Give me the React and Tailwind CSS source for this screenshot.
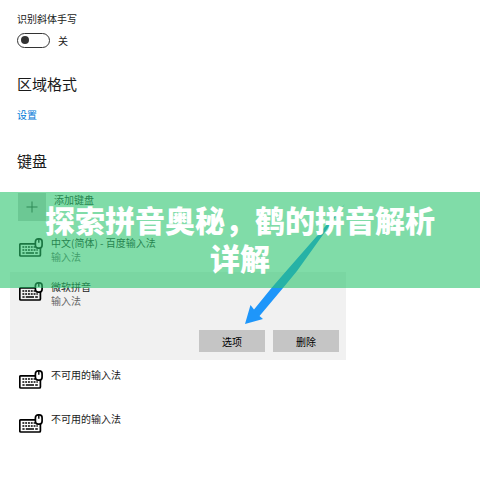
import React, { useState } from 'react';

const keyboards = [
  { id: 'baidu', name: '中文(简体) - 百度输入法', kind: '输入法' },
  { id: 'ms-pinyin', name: '微软拼音', kind: '输入法', selected: true },
  { id: 'unavailable-1', name: '不可用的输入法' },
  { id: 'unavailable-2', name: '不可用的输入法' },
];

function KeyboardIcon() {
  return (
    <svg viewBox="0 0 24 19" className="w-6 h-[19px] shrink-0" fill="none" stroke="#000" aria-hidden="true">
      <path d="M16.5 5.8H1.8a1 1 0 0 0-1 1v10.2a1 1 0 0 0 1 1h18.6a1 1 0 0 0 1-1V9.5" strokeWidth="1.7" />
      <path d="M3.4 9h13" strokeWidth="1.7" strokeDasharray="1.9 .9" />
      <path d="M3.4 12h15.4" strokeWidth="1.7" strokeDasharray="1.9 .9" />
      <path d="M3.4 15h2.2M6.8 15h8.2M16.2 15h2.6" strokeWidth="1.7" />
      <rect x="16.4" y="0.9" width="6.7" height="9.2" rx="2.8" fill="#fff" fillOpacity="0.9" strokeWidth="1.7" />
      <path d="M19.8 1v3.8" strokeWidth="1.4" />
    </svg>
  );
}

function KeyboardItem({ item }) {
  return (
    <li className={item.selected ? 'bg-[#f1f1f1] pb-2' : ''}>
      <div className="flex h-11 gap-2 pl-[9px] pt-2">
        <div className="pt-0.5">
          <KeyboardIcon />
        </div>
        <div className="leading-[14px]">
          <p>{item.name}</p>
          {item.kind && <p className="text-[#666]">{item.kind}</p>}
        </div>
      </div>
      {item.selected && (
        <div className="mt-3.5 flex justify-end gap-2 pr-[7px]">
          <button type="button" className="h-[22px] w-[66px] bg-[#c5c5c5] text-black">选项</button>
          <button type="button" className="h-[22px] w-[66px] bg-[#c5c5c5] text-black">删除</button>
        </div>
      )}
    </li>
  );
}

export default function App() {
  const [italic, setItalic] = useState(false);

  return (
    <div className="relative min-h-screen bg-white pb-8 text-[10px] text-[#1a1a1a] font-['Noto_Sans_CJK_SC','Noto_Sans',sans-serif]">
      <main className="pt-3">
        <section className="px-[17px]">
          <label htmlFor="italic" className="block leading-[14px]">识别斜体手写</label>
          <div className="mt-1.5 flex h-4 items-center gap-2">
            <input
              id="italic"
              type="checkbox"
              role="switch"
              checked={italic}
              onChange={(e) => setItalic(e.target.checked)}
              className="flex h-[15px] w-[33px] appearance-none items-center rounded-full border-[1.5px] border-[#333] px-[3px] before:size-2 before:rounded-full before:bg-[#333] checked:justify-end"
            />
            <span>{italic ? '开' : '关'}</span>
          </div>
          <h2 className="mt-[26px] text-[15px] leading-5">区域格式</h2>
          <a href="#region" className="mt-3.5 block w-fit leading-[14px] text-[#0078d7]">设置</a>
          <h2 className="mt-[27px] text-[15px] leading-6">键盘</h2>
        </section>

        <section className="pt-5">
          <button type="button" className="ml-[18px] flex gap-2 text-left">
            <span className="flex size-7 items-center justify-center bg-[#ccc]">
              <svg viewBox="0 0 12 12" className="size-3" stroke="#333" aria-hidden="true">
                <path d="M6 .5v11M.5 6h11" />
              </svg>
            </span>
            <span className="leading-[14px]">添加键盘</span>
          </button>
          <ul className="mt-[7px] ml-2.5 w-[70%]">
            {keyboards.map((item) => (
              <KeyboardItem key={item.id} item={item} />
            ))}
          </ul>
        </section>
      </main>

      {/* arrow pointing at the options button */}
      <svg viewBox="0 0 100 120" className="absolute left-[245px] top-[204px] h-[120px] w-[100px]" fill="#1e96fa" aria-hidden="true">
        <path d="M0 120 5.5 101 9 105.5 26.5 84 43 65 100 0 52 67 38 84 14.5 112 18 115Z" />
      </svg>

      <div className="absolute inset-x-0 top-48 bg-[#2bc56e]/60 px-10 pt-2 pb-3">
        <h1 className="text-center text-[30px] leading-[38px] font-black text-white">
          探索拼音奥秘，鹤的拼音解析详解
        </h1>
      </div>
    </div>
  );
}
